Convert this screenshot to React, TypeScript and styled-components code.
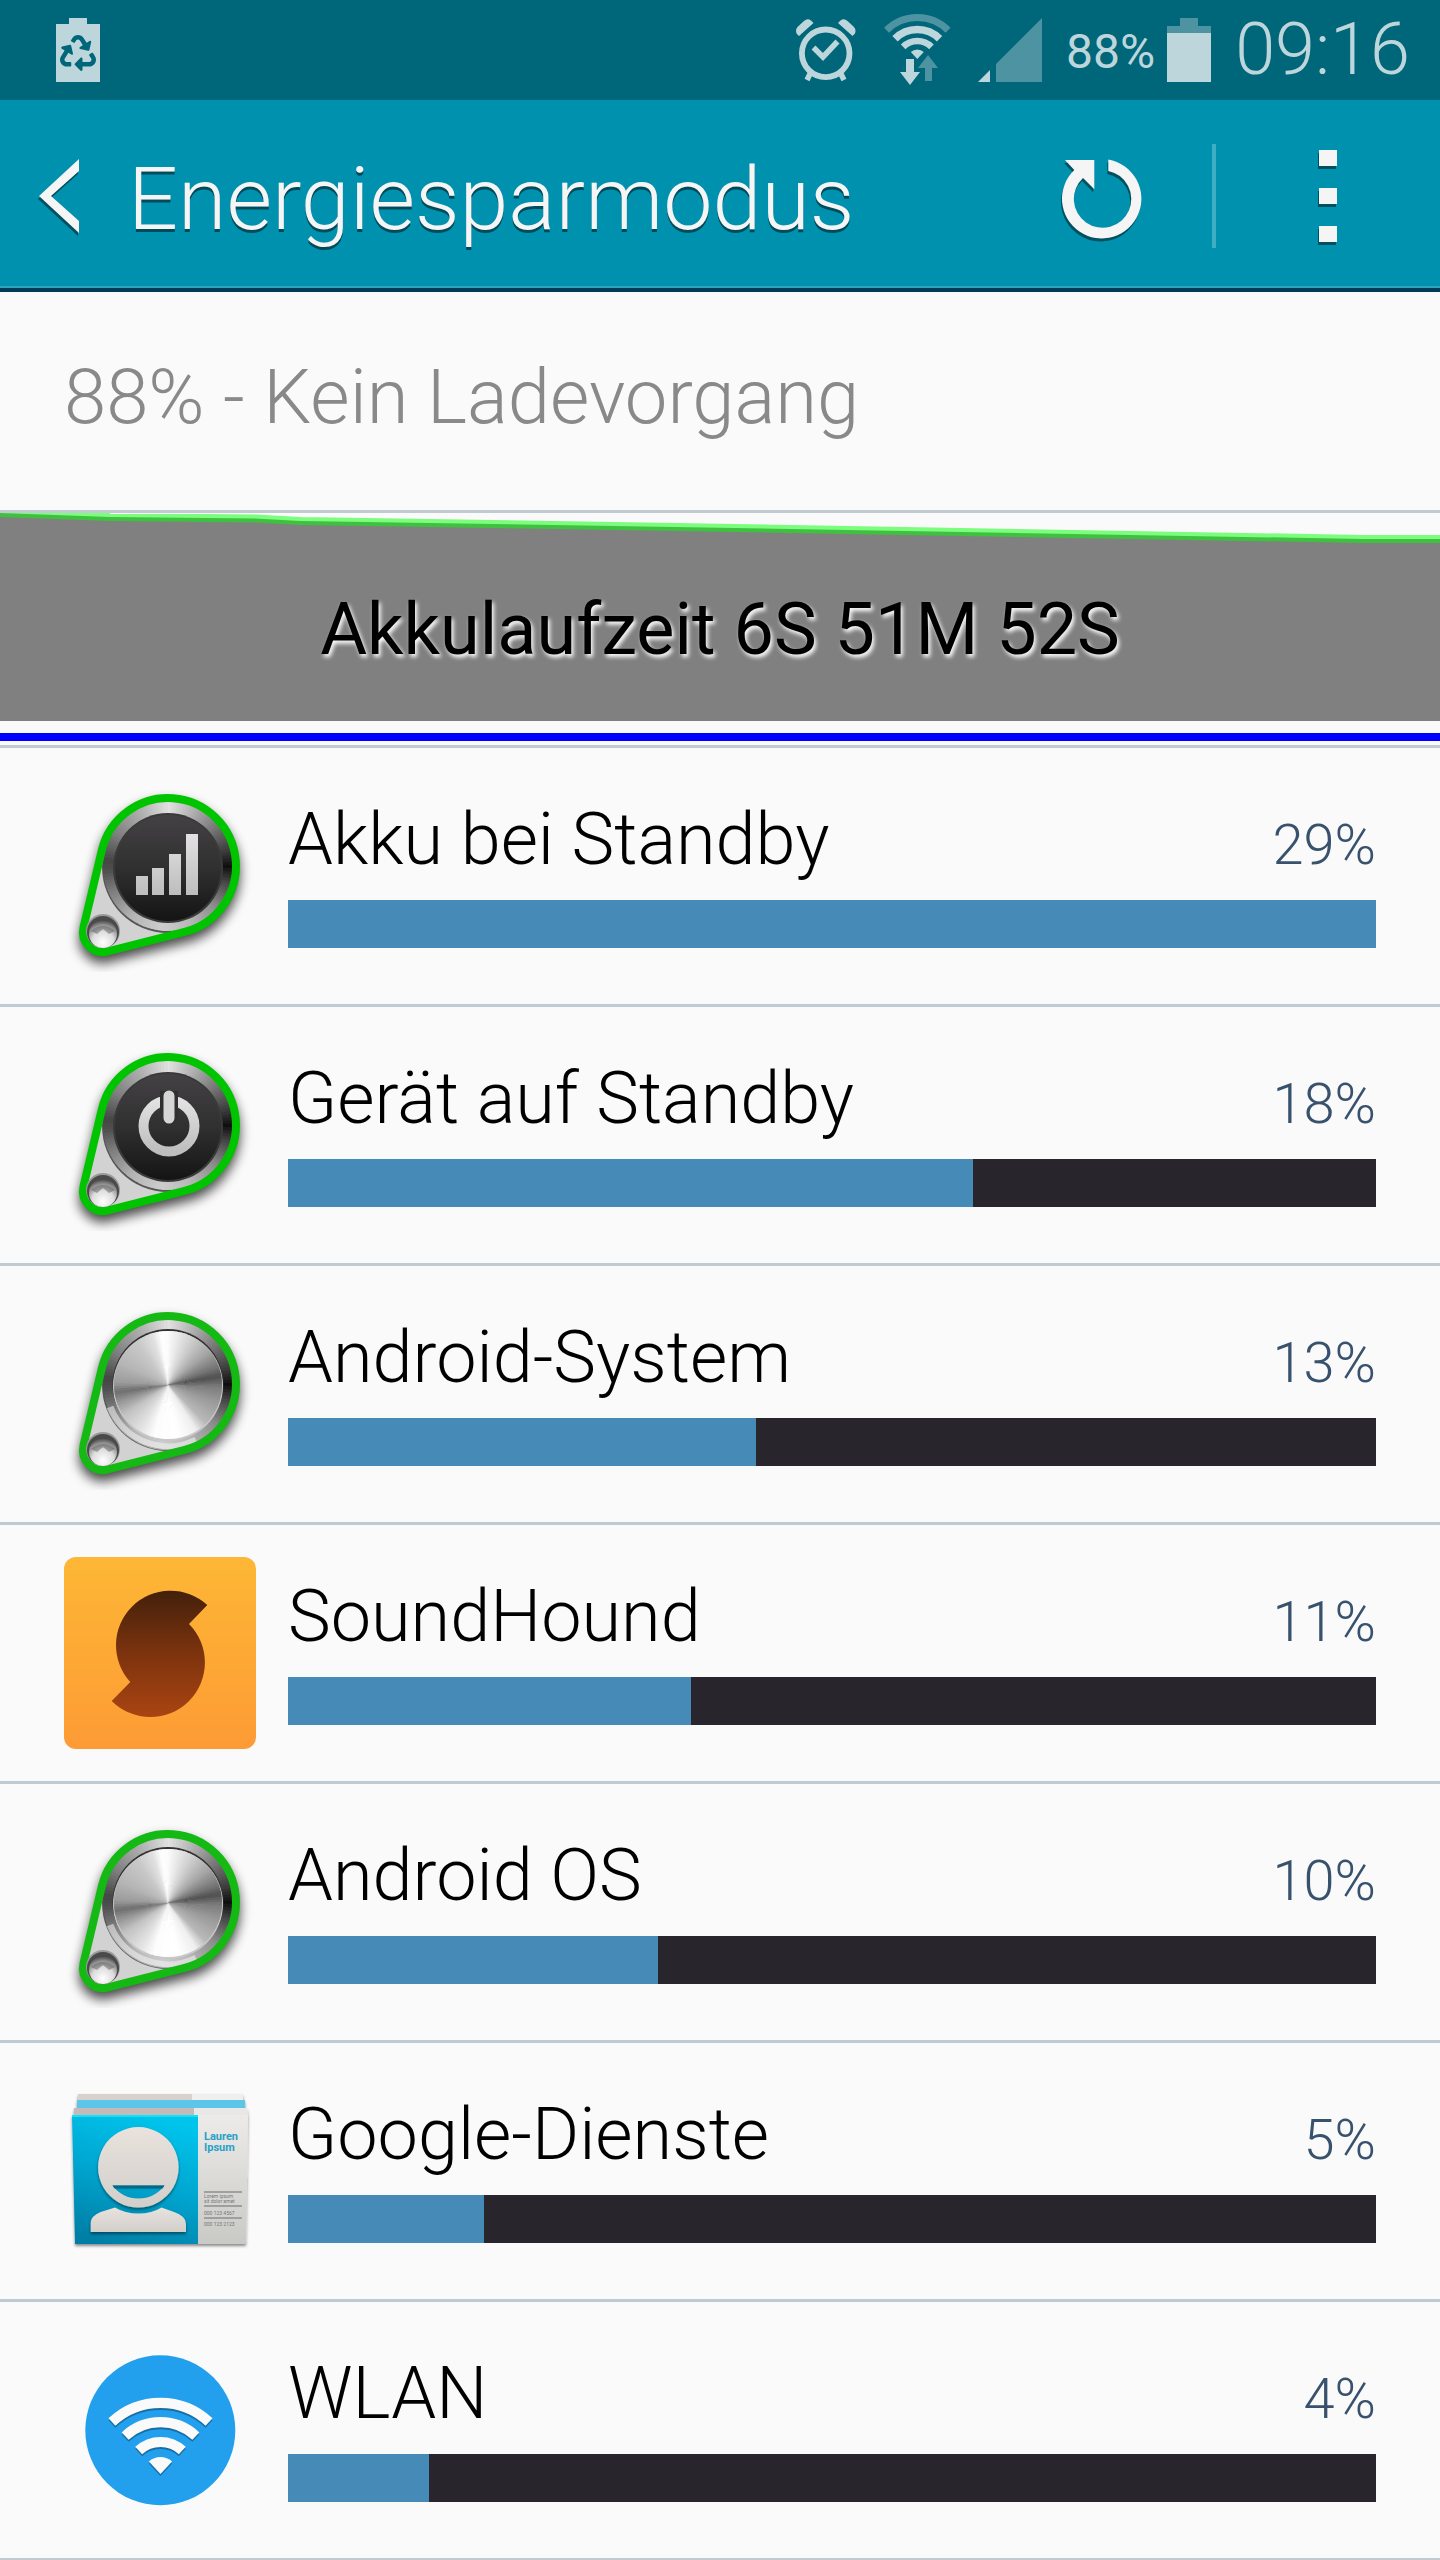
import React, { useId } from "react";
import styled, { createGlobalStyle } from "styled-components";
import { FaRecycle } from "react-icons/fa";

const color = {
  status: "#006679",
  statusIcon: "#bcd6db",
  statusDim: "#4d93a1",
  header: "#0091ae",
  headerText: "#f5f5f5",
  page: "#fafafa",
  divider: "#c0cad2",
  bar: "#468ab8",
  track: "#28262c",
};

const GlobalStyle = createGlobalStyle`
  *, *::before, *::after { box-sizing: border-box; }
  body {
    margin: 0;
    background: ${color.page};
    color: #000;
    font-family: Roboto, "Noto Sans", sans-serif;
  }
  svg { display: block; flex: none; }
`;

const Screen = styled.div`
  display: flex;
  flex-direction: column;
  min-height: 100vh;
`;

const StatusBar = styled.div`
  display: flex;
  align-items: center;
  justify-content: space-between;
  height: 100px;
  padding: 0 30px 0 56px;
  background: ${color.status};
  color: ${color.statusIcon};
`;

const StatusGroup = styled.div`
  display: flex;
  align-items: center;
  gap: ${(p: { $gap: number }) => p.$gap}px;
`;

const SaverBadge = styled.div`
  display: grid;
  place-items: center;
  > * { grid-area: 1 / 1; }
  > :last-child { color: ${color.status}; margin-top: 6px; }
`;

const BatteryPercent = styled.span`
  padding-top: 4px;
  font-size: 48px;
  line-height: 56px;
`;

const Clock = styled.time`
  font-size: 72px;
  font-weight: 300;
  line-height: 96px;
`;

const Header = styled.header`
  display: flex;
  align-items: center;
  height: 192px;
  padding: 4px 71px 0 39px;
  border-bottom: 4px solid #003c57;
  background: ${color.header};
  box-shadow: inset 0 -2px 0 #2aa5bc;
  color: ${color.headerText};
`;

const IconButton = styled.button`
  display: flex;
  align-items: center;
  justify-content: center;
  padding: 0 ${(p: { $pad: number }) => p.$pad}px;
  height: 104px;
  border: 0;
  background: none;
  color: inherit;
  cursor: pointer;
  svg { overflow: visible; filter: drop-shadow(-1px 3px 0 #00505f); }
`;

const Title = styled.h1`
  flex: 1;
  margin: 0 0 0 49px;
  padding-top: 6px;
  font-size: 88px;
  font-weight: 300;
  line-height: 104px;
  text-shadow: 0 3px 0 #004b5a;
`;

const HeaderRule = styled.span`
  width: 4px;
  height: 104px;
  background: #40adc3;
`;

const ChargeState = styled.p`
  margin: 0;
  padding: 57px 64px 65px;
  border-bottom: 3px solid ${color.divider};
  color: #898989;
  font-size: 76px;
  font-weight: 300;
  line-height: 96px;
`;

const Usage = styled.section`
  display: grid;
  border-bottom: 3px solid ${color.divider};
  > * { grid-area: 1 / 1; }
`;

const UsageChart = styled.svg`
  width: 100%;
  height: 232px;
`;

const UsageLabel = styled.h2`
  margin: 0;
  padding-top: 69px;
  font-size: 72px;
  font-weight: 400;
  line-height: 96px;
  text-align: center;
  text-shadow: 2px 3px 4px #fff;
`;

const List = styled.ul`
  margin: 0;
  padding: 0;
  list-style: none;
`;

const Row = styled.li`
  display: flex;
  gap: 32px;
  padding: 32px 64px;
  border-bottom: 3px solid ${color.divider};
  &:last-child { border-bottom-width: 2px; }
`;

const RowBody = styled.div`
  flex: 1;
  min-width: 0;
  padding-top: 12px;
`;

const RowText = styled.div`
  display: flex;
  align-items: baseline;
  justify-content: space-between;
  margin-bottom: 12px;
`;

const Name = styled.label`
  font-size: 72px;
  font-weight: 300;
  line-height: 96px;
`;

const Share = styled.span`
  color: #38526d;
  font-size: 56px;
  font-weight: 300;
  line-height: 56px;
`;

const Meter = styled.progress`
  display: block;
  width: 100%;
  height: 48px;
  border: 0;
  appearance: none;
  background: ${color.track};
  &::-webkit-progress-bar { background: ${color.track}; }
  &::-webkit-progress-value { background: ${color.bar}; }
  &::-moz-progress-bar { background: ${color.bar}; }
`;

/* ---------- geometry helpers ---------- */

const polar = (cx: number, cy: number, r: number, deg: number) => {
  const a = (deg * Math.PI) / 180;
  return `${(cx + r * Math.sin(a)).toFixed(2)} ${(cy - r * Math.cos(a)).toFixed(2)}`;
};

const arc = (cx: number, cy: number, r: number, half: number) =>
  `M${polar(cx, cy, r, -half)}A${r} ${r} 0 0 1 ${polar(cx, cy, r, half)}`;

const fan = (cx: number, cy: number, r: number, half: number) =>
  `${arc(cx, cy, r, half)}L${cx} ${cy}Z`;

type Stop = [angle: number, gray: number];

function Sweep({ cx, cy, r, stops }: { cx: number; cy: number; r: number; stops: Stop[] }) {
  const step = 3;
  const slices = [];
  for (let a = 0; a < 360; a += step) {
    const i = stops.findIndex((s, n) => a >= s[0] && a < stops[n + 1][0]);
    const [a0, g0] = stops[i];
    const [a1, g1] = stops[i + 1];
    const g = Math.round(g0 + ((g1 - g0) * (a - a0)) / (a1 - a0));
    slices.push(
      <path
        key={a}
        fill={`rgb(${g},${g},${g})`}
        d={`M${cx} ${cy}L${polar(cx, cy, r, a - 1)}A${r} ${r} 0 0 1 ${polar(cx, cy, r, a + step)}Z`}
      />
    );
  }
  return <g>{slices}</g>;
}

/* ---------- status icons ---------- */

const SaverIcon = () => (
  <SaverBadge>
    <svg width="44" height="64" viewBox="0 0 44 64" fill="currentColor">
      <path d="M13 0h18v6h13v58H0V6h13z" />
    </svg>
    <FaRecycle size={36} />
  </SaverBadge>
);

const AlarmIcon = () => (
  <svg width="64" height="64" viewBox="0 2 64 64" fill="none" stroke="currentColor">
    <circle cx="31.700" cy="37.300" r="23.800" strokeWidth="5.800" />
    <path d="M19.500 31.500l9.500 9.500 14.500-15.500" strokeWidth="5.500" />
    <path d="M16.500 57l-3.500 7M46.500 57l3.500 7" strokeWidth="5.500" />
    <path
      d="M2.500 17.500q-1.500-4 1.500-7l6-5.500q3.500-3 7-.5l2.500 2.500L5 20zM61 17.500q1.500-4-1.500-7l-6-5.500q-3.500-3-7-.5L44 7l14.500 13z"
      fill="currentColor"
      stroke="none"
    />
  </svg>
);

const WifiStatusIcon = () => (
  <svg width="72" height="72" viewBox="0 0 72 72" fill="none" stroke="currentColor">
    <path d={arc(35.3, 47, 43.5, 45)} strokeWidth="7" stroke={color.statusDim} />
    <path d={arc(35.3, 47, 31.5, 45)} strokeWidth="7.500" />
    <path d={arc(35.3, 47, 20, 45)} strokeWidth="6.500" />
    <path d={fan(35.3, 45, 9.5, 43)} fill="currentColor" stroke="none" />
    <path d="M46 41l10 13h-6v13h-7V54h-7z" fill={color.statusDim} stroke="none" />
    <path d="M24 45h8v13h6L28 71 18 58h6z" fill="currentColor" stroke="none" />
  </svg>
);

const SignalIcon = () => (
  <svg width="64" height="64" viewBox="0 0 64 64">
    <path d="M18 46L64 0v64H18z" fill={color.statusDim} />
    <path d="M0 64l12-12v12z" fill="currentColor" />
  </svg>
);

const BatteryIcon = () => (
  <svg width="44" height="64" viewBox="0 0 44 64">
    <path d="M13 0h18v8h13v7H0V8h13z" fill={color.statusDim} />
    <path d="M0 15h44v49H0z" fill="currentColor" />
  </svg>
);

/* ---------- app icons ---------- */

const ringStops: Stop[] = [
  [0, 225], [25, 175], [50, 120], [75, 60], [90, 15], [105, 70], [130, 140], [160, 185],
  [185, 205], [215, 180], [245, 125], [265, 80], [275, 70], [300, 125], [335, 180], [360, 225],
];

const metalStops: Stop[] = [
  [0, 250], [25, 210], [50, 165], [70, 115], [80, 80], [92, 125], [110, 155], [135, 185],
  [148, 240], [170, 255], [195, 253], [212, 225], [235, 195], [252, 145], [262, 110], [272, 155],
  [295, 182], [325, 202], [342, 225], [352, 255], [360, 250],
];

function Knob({ face }: { face: "signal" | "power" | "metal" }) {
  const id = useId();
  const outline =
    "M37.800 69.300A68 68 0 1 1 120.700 150.900L43.900 170.400A20 20 0 0 1 19.500 146.400Z";
  const metal = face === "metal";
  return (
    <svg width="192" height="192" viewBox="0 -1 192 192" aria-hidden="true">
      <defs>
        <linearGradient id={`${id}dark`} x1="0" y1="0" x2="0" y2="1">
          <stop offset="0" stopColor="#444144" />
          <stop offset=".5" stopColor="#303030" />
          <stop offset="1" stopColor="#141414" />
        </linearGradient>
        <linearGradient id={`${id}glyph`} x1="0" y1="0" x2="0" y2="1">
          <stop offset="0" stopColor="#e2e2e2" />
          <stop offset="1" stopColor="#bdbdbd" />
        </linearGradient>
        <radialGradient id={`${id}rivet`} cx=".5" cy=".8" r=".8">
          <stop offset="0" stopColor="#fff" />
          <stop offset=".5" stopColor="#dcdcdc" />
          <stop offset=".8" stopColor="#8a8a8a" />
          <stop offset="1" stopColor="#444" />
        </radialGradient>
        <filter id={`${id}blur`} x="-20%" y="-20%" width="140%" height="150%">
          <feGaussianBlur stdDeviation="6" />
        </filter>
      </defs>
      <path d={outline} transform="translate(0 7)" fill="#000" stroke="#000" strokeWidth="8" opacity=".7" filter={`url(#${id}blur)`} />
      <path d={outline} fill="#d2d2d2" />
      <circle cx="104" cy="86" r="66" fill="#555" />
      <Sweep cx={104} cy={85} r={65} stops={ringStops} />
      {metal && (
        <path d="M46 108A62 62 0 0 0 132 141" fill="none" stroke="#f4f4f4" strokeWidth="7" opacity=".55" />
      )}
      <path d={outline} fill="none" stroke={metal ? "#14b914" : "#00c400"} strokeWidth="8" strokeLinejoin="round" />
      {metal ? (
        <>
          <circle cx="104" cy="85.500" r="55.500" fill="#333" />
          <circle cx="104" cy="87" r="55" fill="#c8c8c8" />
          <Sweep cx={104} cy={86} r={54} stops={metalStops} />
        </>
      ) : (
        <>
          <circle cx="104" cy="87" r="55" fill="#3a3a3a" />
          <circle cx="104" cy="87" r="53" fill={`url(#${id}dark)`} />
        </>
      )}
      {face === "signal" && (
        <path
          d="M72 95h12v19H72zM88 87h12v27H88zM105 73h12v41h-12zM122 53h12v61h-12z"
          fill={`url(#${id}glyph)`}
        />
      )}
      {face === "power" && (
        <>
          <circle cx="105" cy="86" r="25.500" fill="none" stroke={`url(#${id}glyph)`} strokeWidth="10" />
          <path d="M105 51v30" stroke="#303030" strokeWidth="18" />
          <path d="M105 56v22" stroke="#d6d6d6" strokeWidth="11" strokeLinecap="round" />
        </>
      )}
      <circle cx="39" cy="150" r="17" fill="#9a9a9a" />
      <circle cx="39" cy="151" r="16" fill="#4a4a4a" />
      <circle cx="39" cy="153" r="14" fill={`url(#${id}rivet)`} />
      <path d="M27 150q12-10 24 0l-6 3-6-5-6 5z" fill="#555" opacity=".45" />
    </svg>
  );
}

const SoundHoundIcon = () => (
  <svg width="192" height="192" viewBox="0 0 192 192" aria-hidden="true">
    <defs>
      <linearGradient id="sh-tile" x1="0" y1="0" x2="0" y2="1">
        <stop offset="0" stopColor="#fdb735" />
        <stop offset="1" stopColor="#fd9b35" />
      </linearGradient>
      <linearGradient id="sh-mark" x1="0" y1="0" x2="0" y2="1">
        <stop offset="0" stopColor="#43200b" />
        <stop offset=".5" stopColor="#7d330e" />
        <stop offset="1" stopColor="#aa4412" />
      </linearGradient>
    </defs>
    <rect width="192" height="192" rx="12" fill="url(#sh-tile)" />
    <path
      d="M143.300 48A54.500 54.500 0 0 0 66.300 125L47.700 144A54.500 54.500 0 0 0 125 67Z"
      fill="url(#sh-mark)"
    />
  </svg>
);

const CardText = styled.text`
  font-family: Roboto, "Noto Sans", sans-serif;
  font-size: ${(p: { $size: number }) => p.$size}px;
`;

const ContactsIcon = () => (
  <svg width="192" height="192" viewBox="0 0 192 192" aria-hidden="true">
    <defs>
      <linearGradient id="ct-blue" x1=".6" y1="0" x2=".3" y2="1">
        <stop offset="0" stopColor="#00c4ec" />
        <stop offset=".5" stopColor="#00a5cf" />
        <stop offset="1" stopColor="#007fa6" />
      </linearGradient>
      <linearGradient id="ct-paper" x1="0" y1="0" x2="0" y2="1">
        <stop offset="0" stopColor="#ecebe9" />
        <stop offset="1" stopColor="#c9c9c5" />
      </linearGradient>
      <linearGradient id="ct-skin" x1="0" y1="0" x2="0" y2="1">
        <stop offset="0" stopColor="#e9e2dd" />
        <stop offset="1" stopColor="#d2cfcb" />
      </linearGradient>
      <filter id="ct-shadow" x="-10%" y="-10%" width="120%" height="125%">
        <feDropShadow dx="0" dy="2" stdDeviation="1.500" floodColor="#000" floodOpacity=".45" />
      </filter>
    </defs>
    <g filter="url(#ct-shadow)">
      <path d="M14 19h165v10H14z" fill="#f0efee" />
      <path d="M14 19h114v10H14z" fill="#d9d1ce" />
      <path d="M13 25h168v9H13z" fill="#5cc6e8" />
      <path d="M10 33h173l1 9H10z" fill="#e9e8e6" />
      <path d="M10 33h120v9H10z" fill="#c5bab8" />
      <path d="M134 40h50l-2 129h-48z" fill="url(#ct-paper)" />
      <path d="M8 40h126v129H11z" fill="url(#ct-blue)" />
    </g>
    <path d="M8 40h126v2H8z" fill="#0ce4fb" />
    <g fill="url(#ct-skin)" filter="url(#ct-shadow)">
      <path
        fillRule="evenodd"
        d="M74.300 52a40.300 40.300 0 1 0 .1 0zM48.500 110.500h52q-10 13-26 13t-26-13z"
      />
      <path d="M26.700 157v-9q0-7 10-11l14.300-4.500q10 6 23.500 6t23-6L110 137q12 4 12 12v8z" />
    </g>
    <path d="M48.500 110.500h52l-2 3h-48z" fill="#006a86" />
    <g fill="#2aa0c8" fontWeight="700">
      <CardText $size={11} x="140" y="65">Lauren</CardText>
      <CardText $size={11} x="140" y="76">Ipsum</CardText>
    </g>
    <path d="M140 117h38M140 131h38M140 143h38" stroke="#8f8f8c" strokeWidth="1.500" />
    <g fill="#777">
      <CardText $size={5} x="140" y="123">Lorem ipsum</CardText>
      <CardText $size={5} x="140" y="128">sit dolor amet</CardText>
      <CardText $size={5} x="140" y="140">000 123 4567</CardText>
      <CardText $size={5} x="140" y="151">000 123 2123</CardText>
    </g>
  </svg>
);

const WlanIcon = () => {
  const waves = (
    <>
      <path d={arc(96.5, 140, 71.2, 43)} />
      <path d={arc(96.5, 140, 51.8, 43)} />
      <path d={arc(96.5, 140, 32, 43)} />
    </>
  );
  return (
    <svg width="192" height="192" viewBox="0 0 192 192" aria-hidden="true">
      <circle cx="96.300" cy="96.300" r="75" fill="#22a0ee" />
      <g transform="translate(0 2)" stroke="#176fa6" strokeWidth="10.200" fill="none">{waves}</g>
      <path d={fan(96.5, 142, 17, 43)} fill="#176fa6" />
      <g stroke={color.page} strokeWidth="10.200" fill="none">{waves}</g>
      <path d={fan(96.5, 140, 17, 43)} fill={color.page} />
    </svg>
  );
};

/* ---------- page ---------- */

const apps = [
  { name: "Akku bei Standby", share: 29, level: 100, icon: <Knob face="signal" /> },
  { name: "Gerät auf Standby", share: 18, level: 63, icon: <Knob face="power" /> },
  { name: "Android-System", share: 13, level: 43, icon: <Knob face="metal" /> },
  { name: "SoundHound", share: 11, level: 37, icon: <SoundHoundIcon /> },
  { name: "Android OS", share: 10, level: 34, icon: <Knob face="metal" /> },
  { name: "Google-Dienste", share: 5, level: 18, icon: <ContactsIcon /> },
  { name: "WLAN", share: 4, level: 13, icon: <WlanIcon /> },
];

export default function App() {
  return (
    <Screen>
      <GlobalStyle />
      <StatusBar>
        <SaverIcon />
        <StatusGroup $gap={24}>
          <AlarmIcon />
          <WifiStatusIcon />
          <SignalIcon />
          <StatusGroup $gap={12}>
            <BatteryPercent>88%</BatteryPercent>
            <BatteryIcon />
          </StatusGroup>
          <Clock>09:16</Clock>
        </StatusGroup>
      </StatusBar>

      <Header>
        <IconButton $pad={0} aria-label="Zurück">
          <svg width="40" height="74" viewBox="0 0 40 74" fill="currentColor">
            <path d="M40 0v12L12 37l28 25v12L0 37z" />
          </svg>
        </IconButton>
        <Title>Energiesparmodus</Title>
        <IconButton $pad={71} aria-label="Aktualisieren">
          <svg width="80" height="86" viewBox="0 -6 80 86" fill="currentColor">
            <path d="M47.300 .6A39.700 39.700 0 1 1 13.300 11L4 1H33.300V30.300L22 19A28.700 28.700 0 1 0 47.300 11.900Z" />
          </svg>
        </IconButton>
        <HeaderRule />
        <IconButton $pad={32} aria-label="Weitere Optionen">
          <svg width="89" height="92" viewBox="0 0 89 92" fill="currentColor">
            <path d="M71 0h18v16H71zM71 38h18v16H71zM71 76h18v16H71z" />
          </svg>
        </IconButton>
      </Header>

      <main>
        <ChargeState>88% - Kein Ladevorgang</ChargeState>

        <Usage>
          <UsageChart viewBox="0 0 1440 232" preserveAspectRatio="none" aria-hidden="true">
            <path d="M0 0L110 4L255 5.500L300 8L720 14.700L1363 26H1440V208H0Z" fill="#808080" />
            <path d="M0 0L110 4L255 5.500L300 8L720 14.700L1363 26H1440" fill="none" stroke="#00ff00" strokeOpacity=".5" strokeWidth="8" />
            <path d="M0 220h1440v8H0z" fill="#0000ff" />
          </UsageChart>
          <UsageLabel>Akkulaufzeit 6S 51M 52S</UsageLabel>
        </Usage>

        <List>
          {apps.map(({ name, share, level, icon }, i) => (
            <Row key={name}>
              {icon}
              <RowBody>
                <RowText>
                  <Name htmlFor={`usage-${i}`}>{name}</Name>
                  <Share>{share}%</Share>
                </RowText>
                <Meter id={`usage-${i}`} value={level} max={100} />
              </RowBody>
            </Row>
          ))}
        </List>
      </main>
    </Screen>
  );
}
